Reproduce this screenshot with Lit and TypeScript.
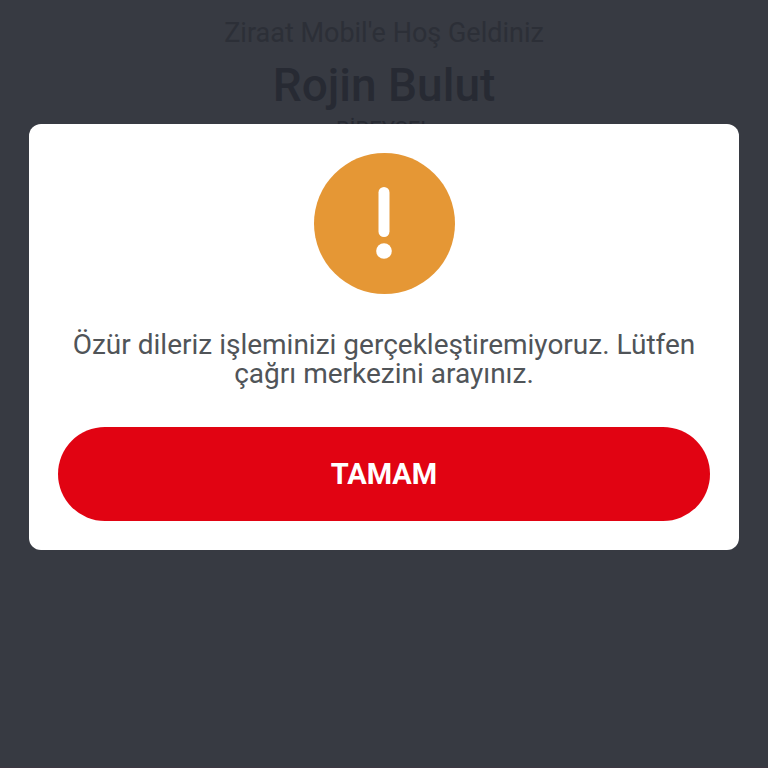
import { LitElement, html, css } from "lit";
import { customElement } from "lit/decorators.js";

@customElement("app-root")
export class AppRoot extends LitElement {
  static styles = css`
    :host {
      display: grid;
      min-height: 100vh;
      box-sizing: border-box;
      background: #373a42;
      border-bottom: 1px solid #3d3742;
      font-family: Roboto, "Noto Sans", sans-serif;
      text-align: center;
    }
    .welcome,
    .overlay {
      grid-area: 1 / 1;
    }
    .welcome {
      padding-top: 16px;
      color: #272a33;
    }
    .greeting {
      margin: 0;
      font-size: 27px;
      line-height: 34px;
      color: #2c2f37;
    }
    .name {
      margin: 8px 0;
      font-size: 46px;
      font-weight: 500;
      line-height: 54px;
    }
    .segment {
      margin: 0;
      font-size: 22px;
      line-height: 20px;
    }
    .overlay {
      padding: 124px 29px 29px;
      z-index: 1;
    }
    .dialog {
      display: flex;
      flex-direction: column;
      align-items: center;
      padding: 29px;
      border-radius: 12px;
      background: #fff;
    }
    .icon {
      display: block;
      width: 141px;
      height: 141px;
    }
    .message {
      margin: 36px 0 39px;
      font-size: 28px;
      line-height: 29px;
      color: #505458;
    }
    .confirm {
      width: 100%;
      height: 94px;
      padding: 0;
      border: 0;
      border-radius: 48px;
      background: #e10312;
      color: #fff;
      font: 700 29px/36px Roboto, "Noto Sans", sans-serif;
      cursor: pointer;
    }
  `;

  render() {
    return html`
      <header class="welcome">
        <p class="greeting">Ziraat Mobil'e Hoş Geldiniz</p>
        <h1 class="name">Rojin Bulut</h1>
        <p class="segment">BİREYSEL</p>
      </header>
      <div class="overlay">
        <section class="dialog" role="alertdialog" aria-modal="true" aria-describedby="message">
          <svg class="icon" viewBox="0 0 141 141" aria-hidden="true">
            <circle cx="70.5" cy="70.5" r="70.5" fill="#e59735" />
            <rect x="64.5" y="34" width="11" height="50" rx="5.5" fill="#fff" />
            <circle cx="70" cy="98" r="7.8" fill="#fff" />
          </svg>
          <p class="message" id="message">
            Özür dileriz işleminizi gerçekleştiremiyoruz. Lütfen çağrı merkezini arayınız.
          </p>
          <button class="confirm" type="button">TAMAM</button>
        </section>
      </div>
    `;
  }
}
